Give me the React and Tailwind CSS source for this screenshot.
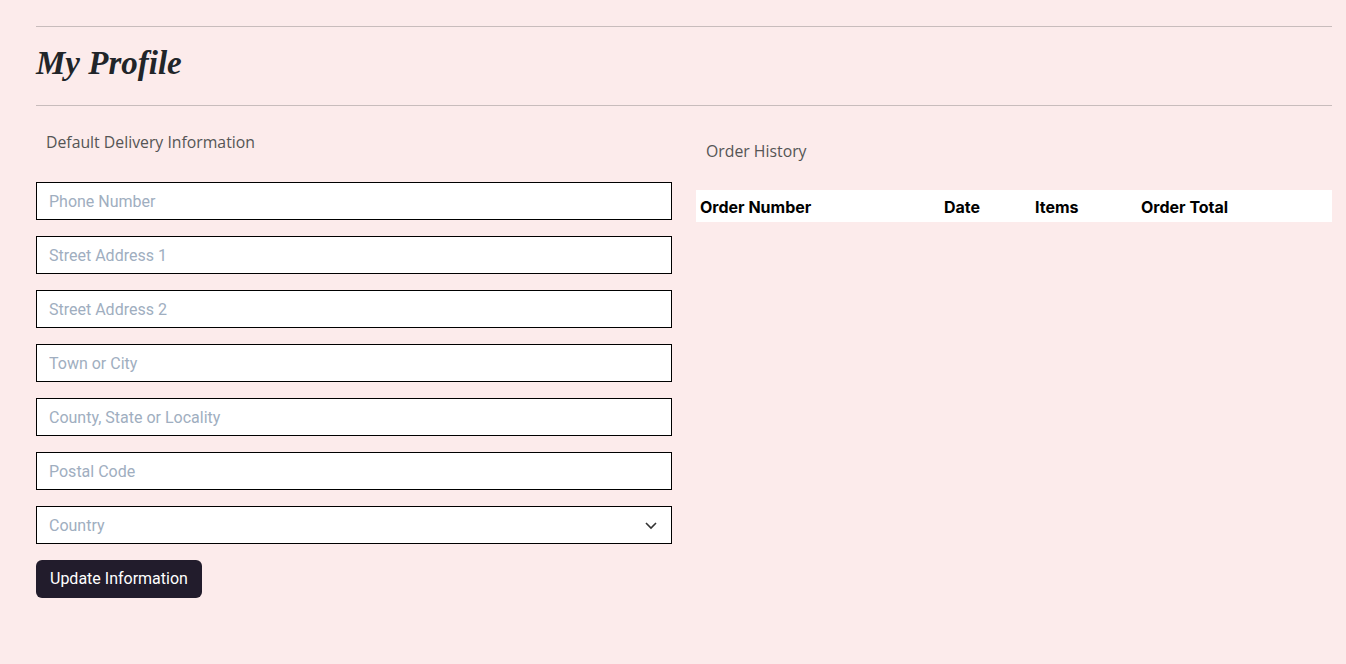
import React from 'react';

const fields = [
  'Phone Number',
  'Street Address 1',
  'Street Address 2',
  'Town or City',
  'County, State or Locality',
  'Postal Code',
];

const App = () => {
  return (
    <div className="min-h-screen bg-[#fcebeb] pl-9 pr-[14px] pt-[26px]" style={{ fontFamily: 'Roboto, sans-serif' }}>
      <hr className="border-t border-[#c8bcbc]" />
      <h1
        className="h-[78px] flex items-center pb-[5px] text-[33px] font-bold italic text-[#212529]"
        style={{ fontFamily: '"Liberation Serif", serif' }}
      >
        My Profile
      </h1>
      <hr className="border-t border-[#c8bcbc]" />

      <div className="grid grid-cols-2 gap-6">
        {/* delivery form */}
        <div>
          <p className="pl-[10px] pt-[25px] h-[76px] text-[15.8px] text-[#555]" style={{ fontFamily: '"Open Sans", sans-serif' }}>
            Default Delivery Information
          </p>
          <form className="flex flex-col gap-4">
            {fields.map((f) => (
              <input
                key={f}
                type="text"
                placeholder={f}
                className="h-[38px] w-full border border-black bg-white px-3 text-[16px] placeholder:text-[#a0aec0] focus:outline-none"
              />
            ))}
            <div className="relative">
              <select
                defaultValue=""
                className="h-[38px] w-full appearance-none border border-black bg-white px-3 pt-[2px] text-[16px] text-[#a0aec0] focus:outline-none"
              >
                <option value="">Country</option>
              </select>
              <svg
                className="absolute right-[14px] top-[14px] pointer-events-none"
                width="14"
                height="10"
                viewBox="0 0 14 10"
                fill="none"
                stroke="#333"
                strokeWidth="1.6"
              >
                <path d="M2 3l5 5 5-5" />
              </svg>
            </div>
            <div>
              <button
                type="button"
                className="h-[38px] rounded-md bg-[#221c2c] px-[14px] text-[16px] text-white"
              >
                Update Information
              </button>
            </div>
          </form>
        </div>

        {/* orders */}
        <div>
          <p className="pl-[10px] pt-[34px] h-[84px] text-[15.8px] text-[#555]" style={{ fontFamily: '"Open Sans", sans-serif' }}>
            Order History
          </p>
          <div
            className="grid grid-cols-[244px_91px_106px_1fr] bg-white h-8 items-center pt-[2px] text-[16px] font-bold text-black"
            style={{ fontFamily: 'Inter, sans-serif' }}
          >
            <span className="pl-1">Order Number</span>
            <span className="pl-1">Date</span>
            <span className="pl-1">Items</span>
            <span className="pl-1">Order Total</span>
          </div>
        </div>
      </div>
    </div>
  );
};

export default App;
